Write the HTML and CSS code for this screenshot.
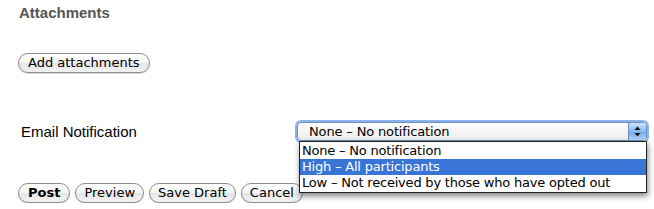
FILE: index.html
```html
<!DOCTYPE html>
<html lang="en">
<head>
    <meta charset="UTF-8">
    <title>Attachments</title>
    <link rel="stylesheet" href="styles.css">
</head>
<body>
    <div class="form">
        <h3 class="heading">Attachments</h3>
        <div class="attach-row">
            <button class="aqua-button wide">Add attachments</button>
        </div>
        <div class="field-row">
            <label class="field-label">Email Notification</label>
            <div class="select-wrap">
                <div class="select-box">
                    <span class="select-value">None &ndash; No notification</span>
                    <span class="select-arrows">
                        <svg width="7" height="11" viewBox="0 0 7 11">
                            <path d="M3.5 0.5 L6.5 4 L0.5 4 Z" fill="#111"/>
                            <path d="M3.5 10.5 L6.5 7 L0.5 7 Z" fill="#111"/>
                        </svg>
                    </span>
                </div>
                <!-- open dropdown list -->
                <ul class="select-list">
                    <li>None &ndash; No notification</li>
                    <li class="selected">High &ndash; All participants</li>
                    <li>Low &ndash; Not received by those who have opted out</li>
                </ul>
            </div>
        </div>
        <div class="actions">
            <button class="aqua-button bold">Post</button>
            <button class="aqua-button">Preview</button>
            <button class="aqua-button">Save Draft</button>
            <button class="aqua-button">Cancel</button>
        </div>
    </div>
</body>
</html>
```

FILE: styles.css
```css
body {
    margin: 0;
    background: #fff;
    font-family: "Liberation Sans", Arial, sans-serif;
    color: #000;
}
.form {
    padding: 4px 0 0 18px;
}
.heading {
    margin: 0 0 0 1px;
    font-size: 15px;
    font-weight: bold;
    color: #555;
    line-height: 18px;
}
.attach-row {
    margin-top: 31px;
}
/* Mac style pill buttons */
.aqua-button {
    font-family: "DejaVu Sans", sans-serif;
    font-size: 13px;
    height: 20px;
    padding: 0 8px;
    border: 1px solid #8c8c8c;
    border-radius: 10px;
    background: linear-gradient(to bottom, #ffffff 0%, #f4f4f4 50%, #e6e6e6 51%, #f2f2f2 100%);
    color: #000;
    line-height: 18px;
    box-shadow: 0 1px 1px rgba(0, 0, 0, 0.15);
}
.aqua-button.wide,
.aqua-button.bold {
    padding: 0 9px;
}
.aqua-button.bold {
    font-weight: bold;
}
.field-row {
    display: flex;
    align-items: center;
    margin-top: 49px;
}
.field-label {
    width: 276px;
    padding-left: 3px;
    font-size: 15px;
}
.select-wrap {
    position: relative;
}
.select-box {
    display: flex;
    align-items: center;
    width: 348px;
    height: 17px;
    border: 1px solid #6d8fbf;
    border-radius: 4px;
    box-shadow: 0 0 0 2px #8cb4ea;
    background: linear-gradient(to bottom, #ffffff, #ececec);
    font-family: "DejaVu Sans", sans-serif;
    font-size: 13px;
}
.select-value {
    flex: 1;
    padding-left: 11px;
    letter-spacing: -0.15px;
}
.select-arrows {
    display: flex;
    align-items: center;
    justify-content: center;
    width: 17px;
    height: 17px;
    border-left: 1px solid #6d8fbf;
    border-radius: 0 3px 3px 0;
    background: linear-gradient(to bottom, #cfe2fb, #8ab7ef 50%, #6ea5ea 51%, #b7d6fa);
}
.select-list {
    position: absolute;
    top: 19px;
    left: 2px;
    width: 346px;
    margin: 0;
    padding: 1px 0 1px;
    list-style: none;
    background: #fff;
    border: 1px solid #222;
    box-shadow: 1px 3px 6px rgba(0, 0, 0, 0.5);
    font-family: "DejaVu Sans", sans-serif;
    font-size: 13px;
    letter-spacing: -0.2px;
}
.select-list li {
    height: 16px;
    line-height: 16px;
    padding-left: 2px;
}
.select-list li.selected {
    background: #3875d7;
    color: #fff;
}
.actions {
    display: flex;
    gap: 5px;
    margin-top: 42px;
}
```
